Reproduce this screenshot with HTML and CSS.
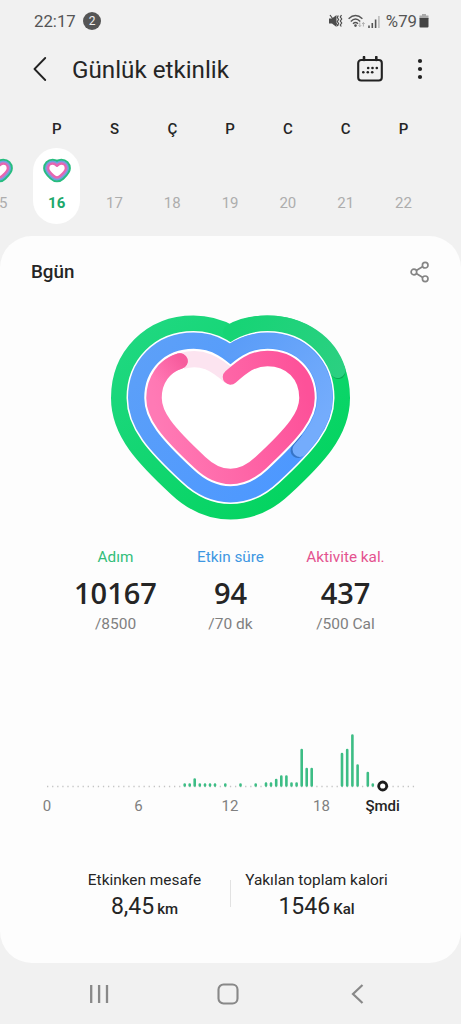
FILE: index.html
```html
<!DOCTYPE html>
<html lang="tr">
<head>
    <meta charset="UTF-8">
    <meta name="viewport" content="width=device-width, initial-scale=1.0">
    <title>Günlük etkinlik</title>
    <link rel="stylesheet" href="styles.css">
</head>
<body>
    <div class="statusbar">
        <span class="time">22:17</span>
        <span class="count">2</span>
        <svg class="mute" width="14" height="14" viewBox="0 0 14 14">
            <path d="M0 4.5h3L7.5 1v12L3 9.5H0z" fill="#4c4c4c"/>
            <path d="M1 1l8 11" stroke="#4c4c4c" stroke-width="1.2"/>
            <path d="M9.3 1.5l-1 2 1.3 2-1.3 2 1.3 2-1.3 2.5M12.5 1l-1.2 2 1.4 2-1.4 2 1.4 2-1.4 2 1 1.5" fill="none" stroke="#4c4c4c" stroke-width="1.2"/>
        </svg>
        <svg class="wifi" width="17" height="14" viewBox="0 0 17 14">
            <path d="M.6 4.7Q7.5-1.8 14.4 4.7M2.8 7.4Q7.5 2.8 12.2 7.4M5 9.8Q7.5 7.4 10 9.8" fill="none" stroke="#555" stroke-width="1.4"/>
            <circle cx="7.5" cy="11.6" r="1.3" fill="#555"/>
            <path d="M11.8 8.5v4M10.5 11.2l1.3 1.5 1.3-1.5M15.4 12.5v-4M14.1 10l1.3-1.5 1.3 1.5" fill="none" stroke="#aaa" stroke-width=".9"/>
        </svg>
        <svg class="signal" width="12" height="13" viewBox="0 0 12 13">
            <path d="M1 13v-2.5M4.3 13V8M7.6 13V4.5" stroke="#555" stroke-width="1.6"/>
            <path d="M10.9 13V1" stroke="#bbb" stroke-width="1.6"/>
        </svg>
        <span class="percent">%79</span>
        <svg class="battery" width="10" height="14" viewBox="0 0 10 14">
            <path d="M3 0h4v1.5h2.5V5h-9V1.5H3z" fill="#aaa"/>
            <path d="M.5 4h9v8.5a1 1 0 0 1-1 1h-7a1 1 0 0 1-1-1z" fill="#444"/>
        </svg>
    </div>

    <header class="topbar">
        <svg class="back" width="14" height="24" viewBox="0 0 14 24">
            <path d="M12.2 1L1.5 12l10.7 11" fill="none" stroke="#222" stroke-width="1.8" stroke-linecap="round" stroke-linejoin="round"/>
        </svg>
        <h1>Günlük etkinlik</h1>
        <svg class="calendar" width="26" height="26" viewBox="0 0 26 26">
            <rect x="1.2" y="4" width="23.6" height="20.5" rx="3" fill="none" stroke="#222" stroke-width="2.1"/>
            <path d="M7 1v3M19.3 1v3" stroke="#222" stroke-width="2.6" stroke-linecap="round"/>
            <g fill="#222">
                <circle cx="11.2" cy="12" r="1.3"/><circle cx="15.5" cy="12" r="1.3"/><circle cx="19.8" cy="12" r="1.3"/>
                <circle cx="6.3" cy="16.3" r="1.3"/><circle cx="10.8" cy="16.3" r="1.3"/><circle cx="15.2" cy="16.3" r="1.3"/>
            </g>
        </svg>
        <svg class="more" width="6" height="22" viewBox="0 0 6 22">
            <g fill="#222"><circle cx="3" cy="3" r="2.1"/><circle cx="3" cy="11" r="2.1"/><circle cx="3" cy="19" r="2.1"/></g>
        </svg>
    </header>

    <div class="week">
        <div class="day first"><b></b><div class="pill"><svg class="mini" viewBox="109 313 243 209"><use href="#miniRings"/></svg><span>15</span></div></div>
        <div class="day selected"><b>P</b><div class="pill"><svg class="mini" viewBox="109 313 243 209"><use href="#miniRings"/></svg><span>16</span></div></div>
        <div class="day"><b>S</b><div class="pill"><span>17</span></div></div>
        <div class="day"><b>Ç</b><div class="pill"><span>18</span></div></div>
        <div class="day"><b>P</b><div class="pill"><span>19</span></div></div>
        <div class="day"><b>C</b><div class="pill"><span>20</span></div></div>
        <div class="day"><b>C</b><div class="pill"><span>21</span></div></div>
        <div class="day"><b>P</b><div class="pill"><span>22</span></div></div>
    </div>

    <main class="card">
        <div class="cardHead">
            <h2>Bgün</h2>
            <svg width="20" height="22" viewBox="0 0 20 22" fill="none" stroke="#858585" stroke-width="1.7">
                <path d="M6.3 9.5l6.5-4M6.3 12.5l6.5 4"/>
                <circle cx="3.9" cy="11" r="2.8"/><circle cx="15.2" cy="4.2" r="2.8"/><circle cx="15.2" cy="17.8" r="2.8"/>
            </svg>
        </div>

        <svg class="heart" width="243" height="209" viewBox="109 313 243 209">
            <defs>
                <linearGradient id="green" gradientUnits="userSpaceOnUse" x1="111" y1="315" x2="280" y2="520">
                    <stop offset="0" stop-color="#22d884"/>
                    <stop offset="1" stop-color="#03d45f"/>
                </linearGradient>
                <linearGradient id="greenEnd" gradientUnits="userSpaceOnUse" x1="231" y1="330" x2="340" y2="375">
                    <stop offset="0" stop-color="#16d475"/>
                    <stop offset="1" stop-color="#2bd081"/>
                </linearGradient>
                <linearGradient id="blue" gradientUnits="userSpaceOnUse" x1="140" y1="340" x2="290" y2="480">
                    <stop offset="0" stop-color="#5da0f8"/>
                    <stop offset="1" stop-color="#4d98ff"/>
                </linearGradient>
                <linearGradient id="blueEnd" gradientUnits="userSpaceOnUse" x1="231" y1="350" x2="320" y2="420">
                    <stop offset="0" stop-color="#5b9df8"/>
                    <stop offset="1" stop-color="#74acfc"/>
                </linearGradient>
                <linearGradient id="pink" gradientUnits="userSpaceOnUse" x1="305" y1="380" x2="155" y2="410">
                    <stop offset="0" stop-color="#fd5199"/>
                    <stop offset="1" stop-color="#ff7ab5"/>
                </linearGradient>
                <linearGradient id="pinkEnd" gradientUnits="userSpaceOnUse" x1="158" y1="382" x2="182" y2="361">
                    <stop offset="0" stop-color="#fc62a3" stop-opacity="0"/>
                    <stop offset="1" stop-color="#f65c9d"/>
                </linearGradient>
                <path id="line" d="M230.5 377C243 366 252 358.5 267.5 358.5C291 358.5 307 375 307 398C307 415 295 431 261 462.5C251 472 242 476.5 230.5 476.5C219 476.5 210 472 200 462.5C166 431 154 415 154 398C154 375 170 358.5 193.5 358.5C209 358.5 218 366 230.5 377z"/>
                <g id="miniRings" fill="none" stroke-linejoin="round">
                    <use href="#line" stroke="#27bd7f" stroke-width="88"/>
                    <use href="#line" stroke="#69a4dc" stroke-width="56"/>
                    <use href="#line" stroke="#a98bd6" stroke-width="34"/>
                    <use href="#line" stroke="#e765b0" stroke-width="20" fill="#fff"/>
                </g>
            </defs>
            <g fill="none" stroke-linejoin="round">
                <use href="#line" stroke="url(#green)" stroke-width="86"/>
                <g stroke-linecap="round" stroke-width="15">
                    <path d="M338 371.5C337 368 335 364 333 360" stroke="#0aa855"/>
                    <path d="M231 332C243 325.5 255 323.5 267 323.5C302 323.5 329 343 337.5 370" stroke="url(#greenEnd)" stroke-width="16"/>
                </g>
                <use href="#line" stroke="#fff" stroke-width="55"/>
                <use href="#line" stroke="url(#blue)" stroke-width="52"/>
                <g stroke-linecap="round" stroke-width="15">
                    <path d="M298 450.5L305 442" stroke="#3674c8"/>
                    <path d="M231 351.5C243 343.5 255 340.5 267 340.5C301 340.5 325 366 325 398C325 415 315 433 300 449.5" stroke="url(#blueEnd)"/>
                </g>
                <use href="#line" stroke="#fff" stroke-width="19.5" fill="#fff"/>
                <path d="M182 361C202 355 216 364 230.5 377" stroke="#fce4f0" stroke-width="16"/>
                <path d="M230.5 377C243 366 252 358.5 267.5 358.5C291 358.5 307 375 307 398C307 415 295 431 261 462.5C251 472 242 476.5 230.5 476.5C219 476.5 210 472 200 462.5C166 431 154 415 154 398C154 380 164 366 180 361" stroke="url(#pink)" stroke-width="15.5" stroke-linecap="round"/>
                <path d="M158 380C162 371 170 364 180 361" stroke="url(#pinkEnd)" stroke-width="15.5" stroke-linecap="round"/>
            </g>
        </svg>

        <div class="stats">
            <div class="stat steps"><h3>Adım</h3><strong>10167</strong><p>/8500</p></div>
            <div class="stat active"><h3>Etkin süre</h3><strong>94</strong><p>/70 dk</p></div>
            <div class="stat calories"><h3>Aktivite kal.</h3><strong>437</strong><p>/500 Cal</p></div>
        </div>

        <svg class="chart" width="461" height="96" viewBox="0 0 461 96">
            <path d="M47 61.5H416" stroke="#c4c4c4" stroke-width="1.3" stroke-dasharray="1.3 3.78"/>
            <g class="bars">
                <path d="M184.7 60.5v-1M189.7 60.5v-1M194.7 60.5v-6M199.8 60.5v-1M205 60.5v-1M210 60.5v-1M215 60.5v-1M225.3 60.5v-1M240.5 60.5v-1M255.7 60.5v-1"/>
                <path d="M266 60.5v-2M271 60.5v-2M276.2 60.5v-5.5M281.3 60.5v-9M286.4 60.5v-9M291.5 60.5v-2M296.6 60.5v-2M301.7 60.5V25M306.7 60.5V44M311.7 60.5V44"/>
                <path d="M342 60.5V29M347.2 60.5V25M352.4 60.5V10.5M357.6 60.5V40.5M367.8 60.5V48M372.8 60.5v-1"/>
            </g>
            <circle cx="382.7" cy="61" r="4" fill="#fff" stroke="#1c1c1c" stroke-width="2.8"/>
            <g class="hours">
                <text x="47" y="86">0</text>
                <text x="138.5" y="86">6</text>
                <text x="230" y="86">12</text>
                <text x="321.5" y="86">18</text>
                <text class="now" x="382.7" y="86">Şmdi</text>
            </g>
        </svg>

        <div class="totals">
            <div class="total"><h4>Etkinken mesafe</h4><p>8,45<small>km</small></p></div>
            <div class="divider"></div>
            <div class="total"><h4>Yakılan toplam kalori</h4><p>1546<small>Kal</small></p></div>
        </div>
    </main>

    <nav class="navbar">
        <svg width="20" height="20" viewBox="0 0 20 20"><path d="M2.2 1v18M10.1 1v18M18 1v18" stroke="#888" stroke-width="2.3"/></svg>
        <svg width="22" height="22" viewBox="0 0 22 22"><rect x="1.5" y="1.5" width="19" height="19" rx="5" fill="none" stroke="#888" stroke-width="2.1"/></svg>
        <svg width="13" height="20" viewBox="0 0 13 20"><path d="M11.5 1L2 10l9.5 9" fill="none" stroke="#888" stroke-width="2.2"/></svg>
    </nav>
</body>
</html>
```

FILE: styles.css
```css
body {
    font-family: Roboto, sans-serif;
    margin: 0;
    width: 461px;
    height: 1024px;
    background-color: #f1f1f1;
    color: #252525;
    overflow: hidden;
}

h1, h2, h3, h4, p {
    margin: 0;
    font-weight: 400;
}

svg {
    display: block;
    flex: none;
}

.statusbar {
    display: flex;
    align-items: center;
    height: 42px;
    padding: 0 32px 0 34px;
    color: #555;
    font-size: 16.8px;
}

.time {
    width: 42px;
}

.count {
    width: 18px;
    margin-left: 7px;
    border-radius: 50%;
    background-color: #555;
    color: #f1f1f1;
    font-size: 12px;
    line-height: 18px;
    text-align: center;
}

.mute {
    margin-left: auto;
}

.wifi {
    margin-left: 5px;
}

.signal {
    margin-left: 3px;
}

.percent {
    margin-left: 6px;
}

.battery {
    margin-left: 2px;
}

.topbar {
    display: flex;
    align-items: center;
    height: 54px;
    padding: 0 38px 0 33px;
}

.topbar h1 {
    margin: 2px 0 0 25px;
    font-size: 24.2px;
}

.calendar {
    margin-left: auto;
}

.more {
    margin-left: 34px;
}

.week {
    display: flex;
    height: 140px;
    overflow: hidden;
}

.day {
    flex: none;
    width: 57.8px;
}

.first {
    margin-left: -30px;
}

.day b {
    display: block;
    height: 20px;
    padding: 23px 0 9px;
    font-size: 15px;
    font-weight: 500;
    line-height: 20px;
    text-align: center;
}

.pill {
    display: flex;
    flex-direction: column;
    align-items: center;
    justify-content: flex-end;
    box-sizing: border-box;
    width: 47px;
    height: 76px;
    margin: 0 auto;
    padding-bottom: 11px;
    border-radius: 24px;
    color: #adadad;
    font-size: 15px;
    line-height: 20px;
}

.mini {
    width: 28px;
    height: 25px;
    margin-bottom: 10px;
}

.selected .pill {
    background-color: #fff;
    color: #20a86b;
    font-weight: 700;
}

.card {
    height: 727px;
    border-radius: 32px;
    background-color: #fdfdfd;
}

.cardHead {
    display: flex;
    align-items: center;
    justify-content: space-between;
    height: 72px;
    padding: 0 31px;
}

.cardHead h2 {
    font-size: 18.8px;
    font-weight: 500;
}

.heart {
    margin: 5px 0 0 109px;
}

.stats {
    display: flex;
    justify-content: center;
    height: 113px;
    padding-top: 24px;
}

.stat {
    width: 115px;
    text-align: center;
    white-space: nowrap;
}

.stat h3 {
    font-size: 15.3px;
    line-height: 22px;
}

.stat strong {
    display: block;
    font-family: "Open Sans", "Noto Sans", sans-serif;
    font-size: 29px;
    font-weight: 600;
    line-height: 49px;
}

.stat p {
    color: #808080;
    font-size: 15.5px;
    line-height: 15px;
}

.steps h3 {
    color: #32bd7a;
}

.active h3 {
    color: #3e97e2;
}

.calories h3 {
    color: #e4528f;
}

.chart {
    margin-top: 66px;
}

.bars {
    stroke: #3dbd85;
    stroke-width: 2.6;
    stroke-linecap: round;
}

.hours {
    fill: #808080;
    font-size: 15px;
    text-anchor: middle;
}

.hours .now {
    fill: #252525;
    font-weight: 500;
}

.totals {
    display: flex;
    justify-content: center;
    padding-top: 48px;
}

.total {
    width: 171px;
    text-align: center;
    white-space: nowrap;
}

.total h4 {
    font-size: 15.4px;
    line-height: 22px;
}

.total p {
    font-size: 23px;
    line-height: 32px;
}

.total small {
    margin-left: 3px;
    font-size: 15px;
    font-weight: 500;
}

.divider {
    width: 1px;
    height: 27px;
    margin-top: 11px;
    background-color: #e2e2e2;
}

.navbar {
    display: flex;
    align-items: center;
    justify-content: space-between;
    height: 61px;
    padding: 0 97px 0 89px;
}

.navbar svg:nth-child(2) {
    margin-right: 5px;
}
```
